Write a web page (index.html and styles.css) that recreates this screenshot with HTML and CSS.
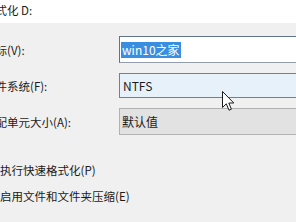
FILE: index.html
```html
<!DOCTYPE html>
<html lang="zh-CN">
<head>
<meta charset="utf-8">
<title>格式化 D:</title>
<link rel="stylesheet" href="styles.css">
</head>
<body>
<div class="dialog">
  <div class="header"><span class="title">格式化 D:</span></div>
  <div class="form">
    <div class="row">
      <span class="label">卷标(V):</span>
      <div class="field edit"><span class="sel">win10之家</span></div>
    </div>
    <div class="row">
      <span class="label">文件系统(F):</span>
      <div class="field combo hot"><span class="val">NTFS</span></div>
    </div>
    <div class="row">
      <span class="label">分配单元大小(A):</span>
      <div class="field combo"><span class="val">默认值</span></div>
    </div>
  </div>
  <div class="opts">
    <div class="opt">执行快速格式化(P)</div>
    <div class="opt">启用文件和文件夹压缩(E)</div>
  </div>
</div>
<svg class="cursor" width="13" height="21" viewBox="0 0 13 21">
  <path d="M0.5 0.5 L0.5 16.5 L4.3 12.8 L7 19.2 L9.4 18.2 L6.8 12 L11.8 12 Z" fill="#fff" stroke="#1a1a1a" stroke-width="1" stroke-linejoin="round"/>
</svg>
</body>
</html>
```
FILE: styles.css
```css
html, body {
  margin: 0;
  padding: 0;
  width: 296px;
  height: 222px;
  overflow: hidden;
  background: #f0f0f0;
}
body {
  position: relative;
  font-family: "Noto Sans CJK SC", "Microsoft YaHei", sans-serif;
  font-size: 11.5px;
  color: #1b1b1b;
}
.dialog {
  margin-left: -16px;
  width: 360px;
}
.header {
  height: 23px;
  background: #ffffff;
  display: flex;
  align-items: center;
}
.title {
  line-height: 16px;
  margin-top: -4px;
}
.form {
  padding-top: 13px;
  display: flex;
  flex-direction: column;
  gap: 10px;
}
.row {
  display: grid;
  grid-template-columns: 135px 1fr;
  align-items: center;
}
.label {
  white-space: nowrap;
}
.field {
  box-sizing: border-box;
  display: flex;
  align-items: center;
  font-size: 12px;
}
.edit {
  height: 27px;
  background: #ffffff;
  border: 1px solid #5f7488;
  border-bottom-color: #939ea8;
  padding-left: 1px;
}
.sel {
  background: #3a8ee2;
  color: #ffffff;
  line-height: 16px;
  padding: 0 1px;
}
.combo {
  height: 26px;
  padding-left: 3px;
}
.hot {
  height: 25px;
  background: #e6f1fa;
  border: 1px solid #4e8bb5;
}
.combo:not(.hot) {
  height: 27px;
  background: #e2e2e2;
  border: 1px solid #b2b2b2;
  padding-left: 2px;
}
.opts {
  margin-top: 22px;
  padding-left: 16px;
}
.opt {
  line-height: 26px;
  white-space: nowrap;
}
.cursor {
  position: absolute;
  left: 222px;
  top: 91px;
}
```
